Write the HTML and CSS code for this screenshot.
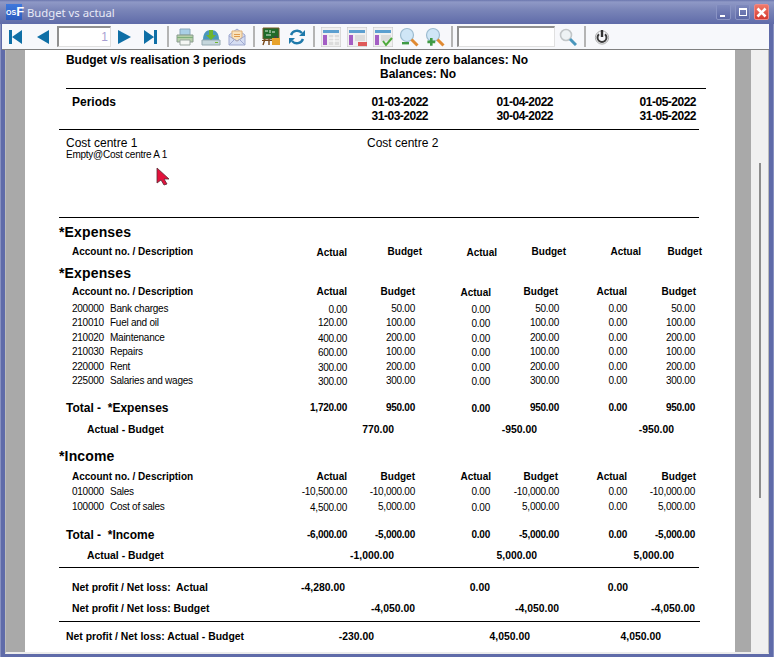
FILE: index.html
```html
<!doctype html>
<html lang="en">
<head>
	<meta charset="utf-8">
	<title>Budget vs actual</title>
	<link rel="stylesheet" href="styles.css">
</head>
<body>
<div class="window">
	<!-- Title bar -->
	<div class="titlebar">
		<div class="appicon"><span class="appicon-os">OS</span>F</div>
		<div class="wintitle">Budget vs actual</div>
		<div class="winbtn"><span class="glyph-min"></span></div>
		<div class="winbtn"><span class="glyph-max"></span></div>
		<div class="winbtn close">
			<svg width="13" height="13" viewBox="0 0 13 13"><path d="M2.5 2.5l8 8M10.5 2.5l-8 8" stroke="#fff" stroke-width="2.6" fill="none"/></svg>
		</div>
	</div>

	<!-- Toolbar -->
	<div class="toolbar">
		<div class="tool"><svg width="16" height="18" viewBox="0 0 16 18"><path d="M2 2h3v14H2zM15 2v14L5 9z" fill="#0f6fa6"/></svg></div>
		<div class="tool tool-prev"><svg width="16" height="18" viewBox="0 0 16 18"><path d="M14 2v14L2 9z" fill="#0f6fa6"/></svg></div>
		<div class="pagebox">1</div>
		<div class="tool"><svg width="16" height="18" viewBox="0 0 16 18"><path d="M2 2v14l13-7z" fill="#0f6fa6"/></svg></div>
		<div class="tool"><svg width="16" height="18" viewBox="0 0 16 18"><path d="M12 2h3v14h-3zM2 2v14l10-7z" fill="#0f6fa6"/></svg></div>
		<div class="sep first"></div>
		<div class="tool"><svg width="20" height="20" viewBox="0 0 20 20"><path d="M5 2h10v6H5z" fill="#a9cfe6" stroke="#8aa8bb"/><path d="M2 8h16v7H2z" fill="#b5cfa8" stroke="#8b9c90"/><path d="M5 13h10v5H5z" fill="#f4f6f4" stroke="#9aa5a0"/><path d="M2 10h16v1H2z" fill="#7fae7c"/></svg></div>
		<div class="tool"><svg width="20" height="20" viewBox="0 0 20 20"><path d="M2 13C2 6 5 3 10 3s8 3 8 10z" fill="#4a97bd"/><path d="M1 13h18v5H1z" fill="#c5d6dc" stroke="#93a8b0"/><path d="M8 3h4v5h3l-5 5-5-5h3z" fill="#6fb52f"/><path d="M14 15h3v1h-3z" fill="#6fb52f"/></svg></div>
		<div class="tool"><svg width="18" height="18" viewBox="0 0 18 18"><path d="M1 7l8-6 8 6v10H1z" fill="#d5ddf2" stroke="#9fa9d0"/><path d="M4 3h10v7l-5 3-5-3z" fill="#f9e3bd" stroke="#e0b27a"/><path d="M1 8l8 5 8-5M1 17l6-6M17 17l-6-6" fill="none" stroke="#9fa9d0"/><path d="M6 6h6v1H6zM6 8h6v1H6z" fill="#dd9a4f"/></svg></div>
		<div class="sep"></div>
		<div class="tool"><svg width="19" height="19" viewBox="0 0 19 19"><path d="M1 1h16v11H1z" fill="#1f6b2a" stroke="#7a5a2a"/><path d="M3 4h3M8 3v3M10 5h3M4 8h5" stroke="#dfeedd" fill="none"/><path d="M3 12l-2 6M7 12v6" stroke="#7a4a1c" stroke-width="1.4" fill="none"/><path d="M0 13h11v1H0z" fill="#7a4a1c"/><path d="M12 9h3v2h-3z" fill="#444"/><path d="M10 11h8v7h-8z" fill="#e8a32c"/></svg></div>
		<div class="tool"><svg width="18" height="18" viewBox="0 0 18 18"><path d="M3 7a6.5 6.5 0 0 1 11-2" fill="none" stroke="#1f79aa" stroke-width="2.4"/><path d="M15 11a6.5 6.5 0 0 1-11 2" fill="none" stroke="#1f79aa" stroke-width="2.4"/><path d="M17 2v6h-6zM1 16v-6h6z" fill="#1f79aa"/></svg></div>
		<div class="sep"></div>
		<div class="tool"><svg width="20" height="20" viewBox="0 0 20 20"><path d="M0 0h20v20H0z" fill="#f0f0f0" stroke="#c4c4c4"/><path d="M2 3h16v3H2z" fill="#5c9fd0"/><path d="M2 8h4v10H2z" fill="#a35ec4"/><path d="M8 8h10v10H8z" fill="#dcdcdc"/><path d="M8 11h10M8 14h10M13 8v10" stroke="#fff"/></svg></div>
		<div class="tool"><svg width="20" height="20" viewBox="0 0 20 20"><path d="M0 0h20v20H0z" fill="#f0f0f0" stroke="#c4c4c4"/><path d="M2 3h16v3H2z" fill="#5c9fd0"/><path d="M2 8h4v10H2z" fill="#a35ec4"/><path d="M8 8h10v6H8z" fill="#dcdcdc"/><path d="M11 15h9v4h-9z" fill="#df5a5a"/></svg></div>
		<div class="tool"><svg width="20" height="20" viewBox="0 0 20 20"><path d="M0 0h20v20H0z" fill="#f0f0f0" stroke="#c4c4c4"/><path d="M2 3h16v3H2z" fill="#5c9fd0"/><path d="M2 8h4v10H2z" fill="#a35ec4"/><path d="M8 8h10v6H8z" fill="#dcdcdc"/><path d="M10 14l3 4 6-7" fill="none" stroke="#4faa3c" stroke-width="2"/></svg></div>
		<div class="tool"><svg width="20" height="20" viewBox="0 0 20 20"><circle cx="8" cy="8" r="6.5" fill="#cfe6f6" stroke="#9dbcd0" stroke-width="1.2"/><path d="M12.5 12.5l6 6" stroke="#e08a32" stroke-width="3"/><path d="M3 15h7v2.4H3z" fill="#3f9a45"/></svg></div>
		<div class="tool"><svg width="20" height="20" viewBox="0 0 20 20"><circle cx="8" cy="8" r="6.5" fill="#cfe6f6" stroke="#9dbcd0" stroke-width="1.2"/><path d="M12.5 12.5l6 6" stroke="#e08a32" stroke-width="3"/><path d="M5 11h2.6v2.6h2.6v2.6H7.6v2.6H5v-2.6H2.4v-2.6H5z" fill="#3f9a45"/></svg></div>
		<div class="sep"></div>
		<div class="searchbox"></div>
		<div class="tool"><svg width="18" height="18" viewBox="0 0 18 18"><circle cx="7" cy="7" r="5.5" fill="#eef2f4" stroke="#c2c6c8" stroke-width="1.6"/><path d="M11 11l6 6" stroke="#4a97bd" stroke-width="3"/></svg></div>
		<div class="sep"></div>
		<div class="tool"><svg width="16" height="16" viewBox="0 0 16 16"><circle cx="8" cy="8.5" r="6.6" fill="none" stroke="#a8a8a8" stroke-width="1"/><path d="M5 5.2a4.5 4.5 0 1 0 6 0" fill="none" stroke="#3a3a3a" stroke-width="2"/><path d="M8 1v7" stroke="#333" stroke-width="2.4"/></svg></div>
	</div>

	<!-- Report preview -->
	<div class="viewer">
		<div class="margin-left"></div>
		<div class="page">
			<svg class="pointer" width="14" height="19" viewBox="0 0 14 19"><path d="M1 1v15l4-3 3 5 3-1-3-5h5z" fill="#e3123c" stroke="#5a2a33" stroke-width=".8"/></svg>

			<div class="row r-title"><div class="c-title">Budget v/s realisation 3 periods</div><div>Include zero balances: No</div></div>
			<div class="row r-title"><div class="c-title"></div><div>Balances: No</div></div>
			<div class="rule rule-top"></div>

			<div class="row r-period"><div class="p-label">Periods</div><div>01-03-2022</div><div>01-04-2022</div><div>01-05-2022</div></div>
			<div class="row r-period"><div class="p-label"></div><div>31-03-2022</div><div>30-04-2022</div><div>31-05-2022</div></div>
			<div class="rule rule-period"></div>

			<div class="row r-centre"><div>Cost centre 1</div><div>Cost centre 2</div></div>
			<div class="row r-sub">Empty@Cost centre A 1</div>
			<div class="rule rule-mid"></div>

			<div class="group first">*Expenses</div>
			<div class="row r-cols r-head-top">
				<div class="desc">Account no. / Description</div>
				<div class="low">Actual</div><div>Budget</div><div class="low">Actual</div><div>Budget</div><div>Actual</div><div>Budget</div>
			</div>

			<div class="group">*Expenses</div>
			<div class="row r-cols r-head">
				<div class="desc">Account no. / Description</div>
				<div>Actual</div><div>Budget</div><div class="low">Actual</div><div>Budget</div><div>Actual</div><div>Budget</div>
			</div>
			<div class="rows">
				<div class="row r-cols r-data"><div class="desc"><span class="acc">200000</span>Bank charges</div><div class="low">0.00</div><div>50.00</div><div class="low">0.00</div><div>50.00</div><div>0.00</div><div>50.00</div></div>
				<div class="row r-cols r-data"><div class="desc"><span class="acc">210010</span>Fuel and oil</div><div>120.00</div><div>100.00</div><div class="low">0.00</div><div>100.00</div><div>0.00</div><div>100.00</div></div>
				<div class="row r-cols r-data"><div class="desc"><span class="acc">210020</span>Maintenance</div><div class="low">400.00</div><div>200.00</div><div class="low">0.00</div><div>200.00</div><div>0.00</div><div>200.00</div></div>
				<div class="row r-cols r-data"><div class="desc"><span class="acc">210030</span>Repairs</div><div class="low">600.00</div><div>100.00</div><div class="low">0.00</div><div>100.00</div><div>0.00</div><div>100.00</div></div>
				<div class="row r-cols r-data"><div class="desc"><span class="acc">220000</span>Rent</div><div class="low">300.00</div><div>200.00</div><div class="low">0.00</div><div>200.00</div><div>0.00</div><div>200.00</div></div>
				<div class="row r-cols r-data"><div class="desc"><span class="acc">225000</span>Salaries and wages</div><div class="low">300.00</div><div>300.00</div><div class="low">0.00</div><div>300.00</div><div>0.00</div><div>300.00</div></div>
			</div>
			<div class="row r-cols r-total first-total">
				<div class="desc-total">Total -&nbsp; *Expenses</div>
				<div>1,720.00</div><div>950.00</div><div class="low">0.00</div><div>950.00</div><div>0.00</div><div>950.00</div>
			</div>
			<div class="row r-diff first-diff"><div class="desc-diff">Actual - Budget</div><div>770.00</div><div>-950.00</div><div>-950.00</div></div>

			<div class="group income">*Income</div>
			<div class="row r-cols r-head">
				<div class="desc">Account no. / Description</div>
				<div>Actual</div><div>Budget</div><div>Actual</div><div>Budget</div><div>Actual</div><div>Budget</div>
			</div>
			<div class="rows small">
				<div class="row r-cols r-data"><div class="desc"><span class="acc">010000</span>Sales</div><div>-10,500.00</div><div>-10,000.00</div><div>0.00</div><div>-10,000.00</div><div>0.00</div><div>-10,000.00</div></div>
				<div class="row r-cols r-data"><div class="desc"><span class="acc">100000</span>Cost of sales</div><div class="low">4,500.00</div><div>5,000.00</div><div class="low">0.00</div><div>5,000.00</div><div>0.00</div><div>5,000.00</div></div>
			</div>
			<div class="row r-cols r-total">
				<div class="desc-total">Total -&nbsp; *Income</div>
				<div>-6,000.00</div><div>-5,000.00</div><div>0.00</div><div>-5,000.00</div><div>0.00</div><div>-5,000.00</div>
			</div>
			<div class="row r-diff"><div class="desc-diff">Actual - Budget</div><div>-1,000.00</div><div>5,000.00</div><div>5,000.00</div></div>
			<div class="rule rule-net"></div>

			<div class="row r-net r-net-actual"><div class="desc">Net profit / Net loss:&nbsp; Actual</div><div>-4,280.00</div><div>0.00</div><div>0.00</div></div>
			<div class="row r-net r-net-budget"><div class="desc">Net profit / Net loss: Budget</div><div>-4,050.00</div><div>-4,050.00</div><div>-4,050.00</div></div>
			<div class="rule rule-last"></div>
			<div class="row r-net r-net-diff"><div class="desc-total">Net profit / Net loss: Actual - Budget</div><div>-230.00</div><div>4,050.00</div><div>4,050.00</div></div>
		</div>
		<div class="margin-right"></div>
		<div class="scrollbar"><div class="thumb"></div></div>
	</div>
</div>
</body>
</html>
```

FILE: styles.css
```css
body { margin: 0; font-family: "Liberation Sans", Arial, sans-serif; color: #000; }

/* Window frame */
.window {
  width: 774px;
  height: 657px;
  box-sizing: border-box;
  padding: 0 5px 3px 5px;
  display: flex;
  flex-direction: column;
  overflow: hidden;
  background: #5f6ba9;
  box-shadow: inset 1px 0 0 #8891c0, inset -1px 0 0 #8891c0;
}

/* Title bar */
.titlebar {
  height: 24px;
  flex: none;
  margin: 0 -5px;
  padding: 0 5px 0 6px;
  display: flex;
  align-items: center;
  background: linear-gradient(#6a76ad 0, #8f99c6 2px, #7a85b8 10px, #5f6ba9 24px);
}
.appicon {
  width: 16px;
  height: 16px;
  margin-right: 5px;
  background: linear-gradient(#3f78dc, #2a5cc0);
  color: #fff;
  font-size: 13px;
  font-weight: bold;
  line-height: 16px;
  text-align: right;
}
.appicon-os { font-size: 7px; vertical-align: 1px; }
.wintitle {
  flex: 1;
  font-family: "Noto Sans", sans-serif;
  font-size: 11.3px;
  color: #e8eaf6;
}
.winbtn {
  width: 15px;
  height: 16px;
  margin-left: 4px;
  box-sizing: border-box;
  border: 1px solid #8a94c4;
  border-radius: 2px;
  display: flex;
  align-items: center;
  justify-content: center;
  background: linear-gradient(#7f8abd, #5c68a6);
}
.winbtn.close { background: linear-gradient(#f07a6a, #d63a30); border-color: #e88; }
.glyph-min { width: 5px; height: 2px; background: #fff; margin-top: 8px; margin-right: 2px; }
.glyph-max { width: 6px; height: 5px; border: 1px solid #fff; border-top-width: 2px; }

/* Toolbar */
.toolbar {
  height: 25px;
  flex: none;
  margin-left: -3px;
  display: flex;
  align-items: center;
  background: #f7f8fb;
  border-bottom: 1px solid #808080;
}
.tool { width: 26px; height: 22px; display: flex; align-items: center; justify-content: center; flex: none; }
.tool-prev { margin-left: 2px; }
.sep { width: 2px; height: 21px; margin: 0 3px; background: #b4b4b4; flex: none; }
.sep.first { margin-left: 4px; }
.pagebox {
  width: 54px;
  height: 21px;
  margin-left: 1px;
  box-sizing: border-box;
  border: 1px solid #e0e0e0;
  border-top: 2px solid #909090;
  border-left: 2px solid #909090;
  background: #fff;
  color: #a79fd2;
  font-size: 12px;
  line-height: 19px;
  text-align: right;
  padding-right: 2px;
  flex: none;
}
.searchbox {
  width: 98px;
  height: 21px;
  margin-left: 1px;
  box-sizing: border-box;
  border: 1px solid #e0e0e0;
  border-top: 2px solid #909090;
  border-left: 2px solid #909090;
  background: #fff;
  flex: none;
}

/* Report area */
.viewer { flex: 1; display: flex; min-height: 0; border-bottom: 2px solid #ececec; border-left: 1px solid #bbb; border-right: 1px solid #bbb; }
.margin-left { width: 19px; background: #a9a9a9; flex: none; }
.margin-right { width: 16px; background: #a9a9a9; flex: none; }
.scrollbar { width: 17px; background: #f0f0f0; flex: none; }
.thumb { width: 2px; height: 335px; margin: 113px 0 0 8px; background: #8c8c8c; }

.page {
  flex: 1;
  position: relative;
  background: #fff;
  padding: 3px 0 0 34px;
  min-width: 0;
  font-size: 10px;
  letter-spacing: -0.25px;
}
.pointer { position: absolute; left: 131px; top: 117px; }

.rule { width: 640px; height: 1px; background: #000; }
.rule-top { margin: 7px 0 6px 7px; }
.rule-period { margin-top: 6px; }
.rule-mid { margin-top: 57px; }
.rule-net { margin-top: 4px; }
.rule-last { margin-top: 5px; width: 641px; }

.row { display: grid; }

.r-title { height: 14px; line-height: 14px; font-size: 12px; font-weight: bold; margin-left: 7px; grid-template-columns: 314px auto; letter-spacing: 0; }
.c-title { letter-spacing: -0.05px; }
.r-period { height: 14px; line-height: 14px; font-size: 12px; font-weight: bold; letter-spacing: -0.5px; grid-template-columns: 100px 269px 125px 143px; text-align: right; }
.p-label { text-align: left; padding-left: 13px; letter-spacing: 0; white-space: nowrap; }
.r-centre { height: 14px; line-height: 14px; font-size: 12px; letter-spacing: 0; margin: 6px 0 0 7px; grid-template-columns: 301px auto; }
.r-sub { height: 10px; line-height: 10px; margin-left: 7px; display: block; }

.group { height: 16px; line-height: 16px; font-size: 14px; font-weight: bold; margin-top: 8px; letter-spacing: .15px; }
.group.first { margin-top: 6px; }
.group.income { margin-top: 11px; }

/* Label plus six figure columns */
.r-cols { grid-template-columns: 200px 88px 68px 75px 69px 68px 68px; text-align: right; }
.r-cols .low { margin-top: 1px; }
.desc { text-align: left; padding-left: 13px; white-space: nowrap; }
.desc-total { text-align: left; padding-left: 7px; white-space: nowrap; font-size: 12px; letter-spacing: 0; }

.r-head { height: 11px; line-height: 11px; margin-top: 5px; font-weight: bold; letter-spacing: 0; grid-template-columns: 200px 88px 68px 76px 67px 69px 69px; }
.group.income + .r-head { margin-top: 7px; }
.r-head-top { height: 11px; line-height: 11px; margin-top: 6px; font-weight: bold; letter-spacing: 0; grid-template-columns: 200px 88px 75px 75px 69px 75px 61px; }

.rows { margin-top: 5px; }
.rows.small { margin-top: 3px; }
.r-data { height: 14.4px; line-height: 14.4px; }
.acc { display: inline-block; width: 38px; }

.r-total { height: 14px; line-height: 14px; margin-top: 14px; font-weight: bold; }
.first-total { margin-top: 13px; }

.r-diff {
  height: 14px;
  line-height: 14px;
  margin-top: 7px;
  font-size: 10.4px;
  font-weight: bold;
  letter-spacing: 0;
  grid-template-columns: 200px 135px 143px 137px;
  text-align: right;
}
.first-diff { margin-top: 8px; }
.desc-diff { text-align: left; padding-left: 28px; }

.r-net { height: 14px; line-height: 14px; font-size: 10.4px; font-weight: bold; letter-spacing: 0; text-align: right; }
.r-net .desc-total { font-size: 10.4px; }
.r-net-actual { margin-top: 13px; grid-template-columns: 200px 86px 145px 138px; }
.r-net-budget { margin-top: 7px; grid-template-columns: 200px 156px 144px 136px; }
.r-net-diff { margin-top: 8px; grid-template-columns: 200px 115px 156px 131px; }
```
